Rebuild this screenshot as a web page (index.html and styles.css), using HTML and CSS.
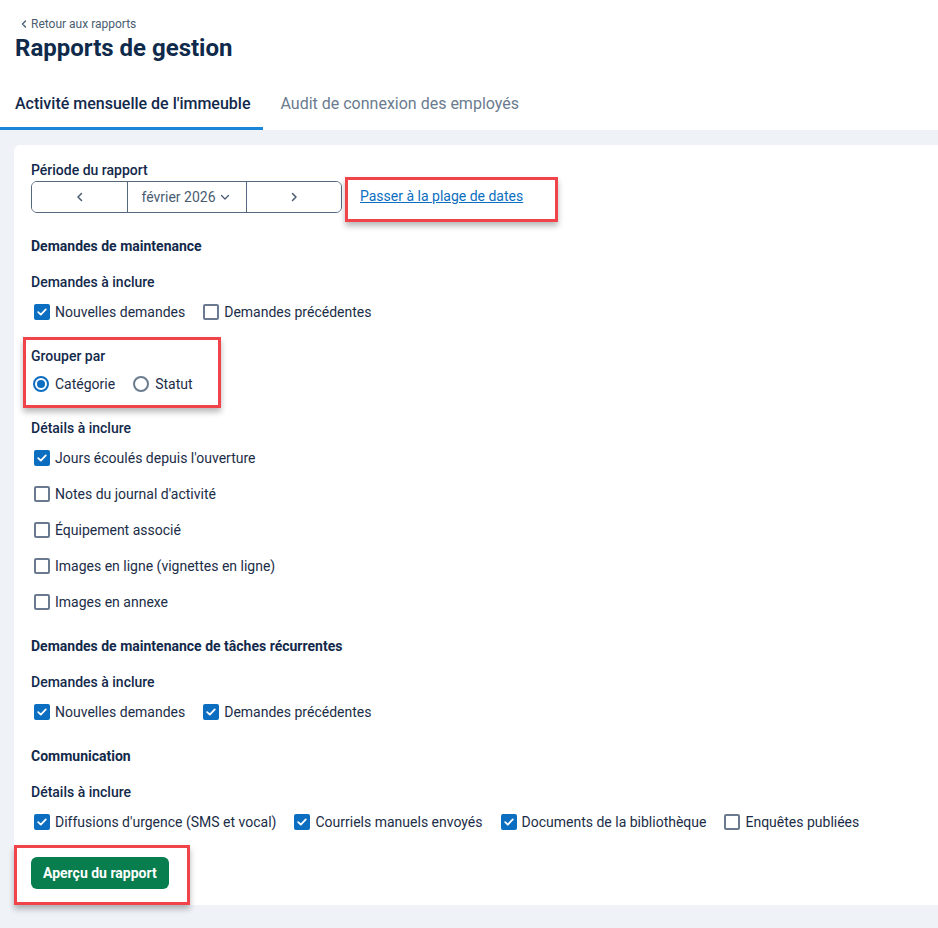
FILE: index.html
```html
<!DOCTYPE html>
<html lang="fr">
<head>
    <meta charset="UTF-8" />
    <meta name="viewport" content="width=device-width, initial-scale=1" />
    <title>Rapports de gestion</title>
    <link rel="stylesheet" href="styles.css">
</head>
<body>
    <!-- Header -->
    <header class="page-header">
        <a href="#" class="back-link">
            <svg width="8" height="8" viewBox="0 0 8 8"><path d="M5.5 1 L2.5 4 L5.5 7" fill="none" stroke="currentColor" stroke-width="1.4" stroke-linecap="round" stroke-linejoin="round"/></svg>
            Retour aux rapports
        </a>
        <h1>Rapports de gestion</h1>
    </header>

    <!-- Tabs -->
    <nav class="tabs">
        <a href="#" class="tab active">Activité mensuelle de l'immeuble</a>
        <a href="#" class="tab">Audit de connexion des employés</a>
    </nav>

    <main class="content">
        <div class="card">
            <div class="field-label">Période du rapport</div>
            <div class="period-row">
                <div class="period-picker">
                    <button class="seg seg-prev">
                        <svg width="10" height="10" viewBox="0 0 10 10"><path d="M6.5 1.5 L3 5 L6.5 8.5" fill="none" stroke="currentColor" stroke-width="1.5" stroke-linecap="round" stroke-linejoin="round"/></svg>
                    </button>
                    <button class="seg seg-month">
                        février 2026
                        <svg width="10" height="10" viewBox="0 0 10 10"><path d="M1.5 3.5 L5 7 L8.5 3.5" fill="none" stroke="currentColor" stroke-width="1.3" stroke-linecap="round" stroke-linejoin="round"/></svg>
                    </button>
                    <button class="seg seg-next">
                        <svg width="10" height="10" viewBox="0 0 10 10"><path d="M3.5 1.5 L7 5 L3.5 8.5" fill="none" stroke="currentColor" stroke-width="1.5" stroke-linecap="round" stroke-linejoin="round"/></svg>
                    </button>
                </div>
                <div class="callout callout-link">
                    <a href="#" class="text-link">Passer à la plage de dates</a>
                </div>
            </div>

            <!-- Maintenance -->
            <section class="section">
                <h2 class="section-title">Demandes de maintenance</h2>
                <div class="group">
                    <div class="group-label">Demandes à inclure</div>
                    <div class="options">
                        <label class="opt"><span class="box checked"></span>Nouvelles demandes</label>
                        <label class="opt"><span class="box"></span>Demandes précédentes</label>
                    </div>
                </div>
                <div class="group callout callout-group">
                    <div class="group-label">Grouper par</div>
                    <div class="options radios">
                        <label class="opt"><span class="radio checked"></span>Catégorie</label>
                        <label class="opt"><span class="radio"></span>Statut</label>
                    </div>
                </div>
                <div class="group">
                    <div class="group-label">Détails à inclure</div>
                    <div class="options stacked">
                        <label class="opt"><span class="box checked"></span>Jours écoulés depuis l'ouverture</label>
                        <label class="opt"><span class="box"></span>Notes du journal d'activité</label>
                        <label class="opt"><span class="box"></span>Équipement associé</label>
                        <label class="opt"><span class="box"></span>Images en ligne (vignettes en ligne)</label>
                        <label class="opt"><span class="box"></span>Images en annexe</label>
                    </div>
                </div>
            </section>

            <!-- Recurring tasks -->
            <section class="section">
                <h2 class="section-title">Demandes de maintenance de tâches récurrentes</h2>
                <div class="group">
                    <div class="group-label">Demandes à inclure</div>
                    <div class="options">
                        <label class="opt"><span class="box checked"></span>Nouvelles demandes</label>
                        <label class="opt"><span class="box checked"></span>Demandes précédentes</label>
                    </div>
                </div>
            </section>

            <!-- Communication -->
            <section class="section">
                <h2 class="section-title">Communication</h2>
                <div class="group">
                    <div class="group-label">Détails à inclure</div>
                    <div class="options">
                        <label class="opt"><span class="box checked"></span>Diffusions d'urgence (SMS et vocal)</label>
                        <label class="opt"><span class="box checked"></span>Courriels manuels envoyés</label>
                        <label class="opt"><span class="box checked"></span>Documents de la bibliothèque</label>
                        <label class="opt"><span class="box"></span>Enquêtes publiées</label>
                    </div>
                </div>
            </section>

            <div class="callout callout-button">
                <button class="btn-primary">Aperçu du rapport</button>
            </div>
        </div>
    </main>
</body>
</html>
```

FILE: styles.css
```css
* {
    box-sizing: border-box;
    margin: 0;
    padding: 0;
    font-family: Roboto, "Liberation Sans", sans-serif;
}

html, body {
    height: 100%;
}

body {
    background: #fff;
    color: #13294b;
    overflow-x: hidden;
    display: flex;
    flex-direction: column;
}

/* Header */
.page-header {
    padding: 16px 15px 0;
}

.back-link {
    display: flex;
    align-items: center;
    gap: 3px;
    margin-left: 5px;
    font-size: 12px;
    line-height: 16px;
    color: #4a5c72;
    text-decoration: none;
}

.page-header h1 {
    font-size: 24px;
    line-height: 32px;
    font-weight: 700;
    color: #0f2a4a;
}

/* Tabs */
.tabs {
    display: flex;
    gap: 2px;
    margin-top: 15px;
}

.tab {
    padding: 13px 13px 11px 15px;
    font-size: 16px;
    line-height: 24px;
    color: #6a7b8f;
    text-decoration: none;
    border-bottom: 3px solid transparent;
}

.tab.active {
    color: #13294b;
    font-weight: 500;
    border-bottom-color: #1a86d9;
}

/* Content */
.content {
    flex: 1;
    background: #eff2f7;
    padding: 15px 0 23px 14px;
}

.card {
    background: #fff;
    border-radius: 6px;
    margin-right: -20px;
    padding: 15px 17px 16px;
}

.field-label,
.group-label {
    font-size: 14px;
    line-height: 20px;
    font-weight: 500;
}

.field-label {
    margin-bottom: 1px;
}

.period-row {
    display: flex;
    align-items: flex-start;
}

.period-picker {
    display: flex;
    height: 32px;
    border: 1px solid #56687e;
    border-radius: 6px;
    overflow: hidden;
}

.seg {
    display: flex;
    align-items: center;
    justify-content: center;
    gap: 4px;
    background: #fff;
    border: none;
    color: #4a5c72;
    font-size: 14px;
    cursor: pointer;
}

.seg-prev { width: 95px; }
.seg-month {
    width: 120px;
    padding-right: 3px;
    border-left: 1px solid #56687e;
    border-right: 1px solid #56687e;
}
.seg-next { width: 94px; }

.text-link {
    font-size: 14px;
    line-height: 20px;
    color: #0b6ec0;
    text-decoration: underline;
}

/* Sections */
.section {
    margin-top: 23px;
}

.section + .section {
    margin-top: 24px;
}

.section-title {
    font-size: 14px;
    line-height: 20px;
    font-weight: 700;
    margin-bottom: 16px;
}

.group + .group {
    margin-top: 24px;
}

.group-label {
    margin-bottom: 10px;
}

.options {
    display: flex;
    gap: 15px;
}

.options.radios {
    gap: 16px;
}

.options.stacked {
    flex-direction: column;
    gap: 16px;
}

.opt {
    display: flex;
    align-items: center;
    gap: 5px;
    font-size: 14px;
    line-height: 20px;
    color: #1b2d47;
}

.radios .opt {
    gap: 6px;
}

.box {
    width: 16px;
    height: 16px;
    margin-left: 3px;
    border: 2px solid #6a7b8f;
    border-radius: 2px;
    background: #fff;
}

.box.checked {
    border-color: #0b6ec0;
    background: #0b6ec0 url("data:image/svg+xml;utf8,<svg xmlns='http://www.w3.org/2000/svg' width='12' height='12' viewBox='0 0 12 12'><path d='M2.2 6.2 L4.8 8.6 L9.8 3.4' fill='none' stroke='white' stroke-width='1.8' stroke-linecap='round' stroke-linejoin='round'/></svg>") center / 12px no-repeat;
}

.radio {
    width: 16px;
    height: 16px;
    margin-left: 2px;
    border: 2px solid #6a7b8f;
    border-radius: 50%;
    background: #fff;
    position: relative;
}

.radio.checked {
    border-color: #0b6ec0;
}

.radio.checked::after {
    content: "";
    position: absolute;
    top: 2px;
    left: 2px;
    width: 8px;
    height: 8px;
    border-radius: 50%;
    background: #0b6ec0;
}

.btn-primary {
    display: block;
    height: 32px;
    padding: 0 12px;
    background: #087d4e;
    color: #fff;
    border: none;
    border-radius: 6px;
    font-size: 14px;
    font-weight: 700;
    cursor: pointer;
}

/* Red annotation boxes */
.callout {
    border: 3px solid #f0444a;
    box-shadow: 0 4px 6px rgba(0, 0, 0, 0.28);
}

.callout-link {
    margin: -4px 0 -9px 3px;
    padding: 6px 32px 13px 12px;
}

.group.callout-group {
    width: fit-content;
    margin: 15px 0 -14px -8px;
    padding: 6px 25px 11px 5px;
}

.callout-group .group-label {
    margin-bottom: 8px;
}

.callout-button {
    width: fit-content;
    margin: 13px 0 -16px -17px;
    padding: 9px 18px 13px 14px;
}
```
